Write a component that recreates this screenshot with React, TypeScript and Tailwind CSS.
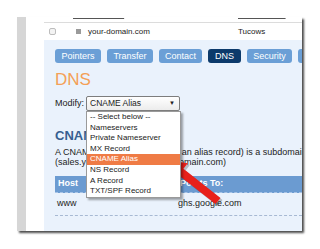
import React from 'react';

const tabs = [
  { name: 'Pointers', cls: 'w-[46px] bg-[#6b9fd6]' },
  { name: 'Transfer', cls: 'w-[46px] bg-[#6b9fd6]' },
  { name: 'Contact', cls: 'w-[43px] bg-[#6b9fd6]' },
  { name: 'DNS', cls: 'w-[33px] bg-[#0c3a6b]' },
  { name: 'Security', cls: 'w-[45px] bg-[#6b9fd6]' },
  { name: 'Advanced', cls: 'w-[50px] bg-[#6b9fd6]' },
];

const options = [
  '-- Select below --',
  'Nameservers',
  'Private Nameserver',
  'MX Record',
  'CNAME Alias',
  'NS Record',
  'A Record',
  'TXT/SPF Record',
];

export default function App() {
  return (
    <div className="relative w-[320px] h-[249px] overflow-hidden bg-white pt-[17px] pl-[17px] font-['Liberation_Sans',Arial,sans-serif] text-[#222]">
      {/* screenshot frame */}
      <div className="flex w-[285px] h-[214px] bg-white shadow-[2px_2px_2px_rgba(0,0,0,0.7)]">
        <div className="w-[9px] shrink-0 bg-[#d6d6d6]" />
        <div className="w-[18px] shrink-0 bg-white" />
        <div className="flex-1 min-w-0 flex flex-col overflow-hidden">
          {/* previous row, cut at the top */}
          <div className="relative h-[6px] shrink-0 border-b border-[#dcdcdc] overflow-hidden whitespace-nowrap text-[8px]">
            <span className="absolute left-[5px] top-[-6px] w-[6px] h-[6px] rounded-[1px] border border-[#c8c8c8] bg-[#f2f2f2]" />
            <span className="absolute left-[29px] top-[-8px] underline text-[#555]">Domain Name</span>
            <span className="absolute left-[194px] top-[-8px] underline text-[#555]">Nameservers</span>
          </div>
          {/* domain row */}
          <div className="flex items-center h-[17px] shrink-0 whitespace-nowrap text-[8px]">
            <span className="ml-[5px] w-[7px] h-[7px] rounded-[2px] border border-[#bdbdbd] bg-[#f3f3f3]" />
            <span className="ml-[20px] w-[5px] h-[5px] bg-[#9a9a9a]" />
            <span className="ml-[7px] w-[150px]">your-domain.com</span>
            <span>Tucows</span>
          </div>
          {/* DNS panel */}
          <div className="flex-1 bg-[#eaf2fc] pl-[11px] pt-[9px] whitespace-nowrap overflow-hidden">
            <div className="flex gap-[6px] h-[14px]">
              {tabs.map((t) => (
                <div
                  key={t.name}
                  className={`${t.cls} shrink-0 h-[14px] rounded-[3px] text-white text-[9px] leading-[14px] text-center`}
                >
                  {t.name}
                </div>
              ))}
            </div>

            <div className="mt-[5px] h-[24px] text-[17px] leading-[24px] text-[#f4a057]">DNS</div>

            <div className="mt-[4px] flex items-center h-[15px] text-[9px]">
              <span className="w-[31px]">Modify:</span>
              <div className="relative w-[94px] h-[15px] rounded-[2px] border border-[#7d7d7d] bg-gradient-to-b from-white to-[#ececec] flex items-center justify-between pl-[3px] pr-[4px] text-[8.5px]">
                <span>CNAME Alias</span>
                <span className="text-[6px]">▼</span>
                {/* open list */}
                <div className="absolute left-[-1px] top-[14px] w-[95px] border border-[#9a9a9a] bg-white shadow-[2px_2px_2px_rgba(0,0,0,0.35)] z-10">
                  {options.map((o) => (
                    <div
                      key={o}
                      className={`h-[10.6px] leading-[10.6px] pl-[3px] text-[8px] ${
                        o === 'CNAME Alias' ? 'bg-[#ef7b45] text-white' : 'text-[#222]'
                      }`}
                    >
                      {o}
                    </div>
                  ))}
                </div>
              </div>
            </div>

            <div className="mt-[17px] h-[16px] text-[13px] leading-[16px] font-bold text-[#375f90]">CNAME Records</div>

            <div className="mt-[3px] text-[9px] leading-[10px]">
              <div>
                A CNAM<span className="tracking-[-0.3px]">E record (also known as</span> an alias record) is a subdomain
              </div>
              <div>(sales.your-domain.com) to a domain.com)</div>
            </div>

            <div className="mt-[9px] flex h-[17px] items-center bg-[#6b9bd1] border-b border-dashed border-[#a9c4e6] text-white text-[9px] font-bold">
              <span className="pl-[3px] w-[125px]">Host</span>
              <span>Points To:</span>
            </div>
            <div className="flex h-[23px] items-center border-b border-dashed border-[#a7b9d3] text-[9px]">
              <span className="pl-[2px] w-[123px]">www</span>
              <span>ghs.google.com</span>
            </div>
          </div>
        </div>
      </div>

      {/* red pointer arrow */}
      <svg className="absolute left-0 top-0 pointer-events-none" width="320" height="249" viewBox="0 0 320 249">
        <polygon
          points="168,162 189.7,165.2 185.4,170.7 222.5,199.9 217.5,206.1 180.4,177 176.1,182.4"
          fill="rgba(0,0,0,0.22)"
        />
        <polygon
          points="166,160 187.7,163.2 183.4,168.7 220.5,197.9 215.5,204.1 178.4,175 174.1,180.4"
          fill="#e8201a"
        />
      </svg>
    </div>
  );
}
